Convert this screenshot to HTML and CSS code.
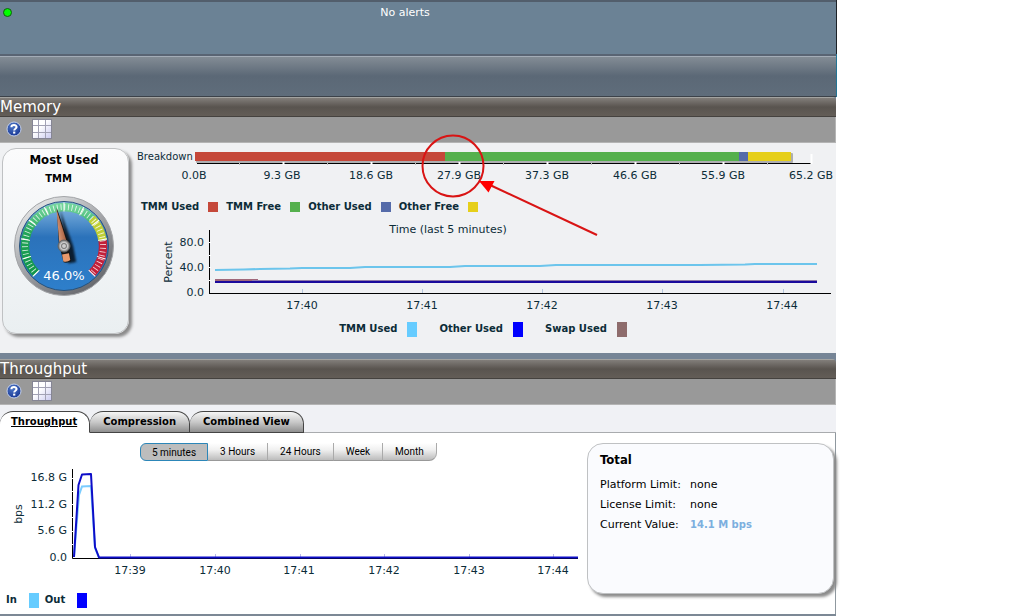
FILE: index.html
```html
<!DOCTYPE html>
<html lang="en">
<head>
<meta charset="utf-8">
<title>Dashboard</title>
<link rel="stylesheet" href="styles.css">
</head>
<body>
<svg width="0" height="0" class="defs" aria-hidden="true">
  <defs>
    <radialGradient id="helpFill" cx="0.4" cy="0.3" r="0.8"><stop offset="0" stop-color="#4e78c8"/><stop offset="1" stop-color="#12308f"/></radialGradient>
    <linearGradient id="cellFill" x1="0" y1="0" x2="1" y2="1"><stop offset="0.4" stop-color="#fff"/><stop offset="1" stop-color="#c9c9ef"/></linearGradient>
    <symbol id="help" viewBox="0 0 16 16">
      <circle cx="8" cy="8" r="7" fill="url(#helpFill)" stroke="#c3cfe8"/>
      <path d="M5.4 6.2C5.4 3.4 10.6 3.4 10.6 6.1C10.6 7.8 8.2 7.7 8.2 9.4" fill="none" stroke="#fff" stroke-width="2"/>
      <rect x="7.1" y="10.6" width="2.2" height="2" fill="#fff"/>
    </symbol>
    <symbol id="grid" viewBox="0 0 20 20">
      <rect x="0.5" y="0.5" width="19" height="19" fill="url(#cellFill)" stroke="#858594"/>
      <path d="M6.5 1V19M13.5 1V19M1 6.5H19M1 13.5H19" stroke="#a2a2b4"/>
    </symbol>
  </defs>
</svg>
<main class="dashboard">
  <header class="status">
    <span class="led"></span>
    <span>No alerts</span>
  </header>
  <div class="strip"></div>

  <section>
    <h2 class="title">Memory</h2>
    <div class="tools">
      <button class="tool" aria-label="Help"><svg width="16" height="16"><use href="#help"/></svg></button>
      <button class="tool" aria-label="Show table"><svg width="20" height="20"><use href="#grid"/></svg></button>
    </div>
    <div class="memory">
      <div class="card gauge-card">
        <h3 class="card-title">Most Used</h3>
        <h4 class="card-sub">TMM</h4>
        <svg class="gauge" viewBox="0 0 104 104" width="104" height="104" role="img" aria-label="TMM 46.0%">
          <defs>
            <linearGradient id="rim" x1="0.1" y1="0" x2="0.8" y2="1"><stop offset="0" stop-color="#f4f4f4"/><stop offset="0.35" stop-color="#b8babd"/><stop offset="0.65" stop-color="#8d8f93"/><stop offset="1" stop-color="#606267"/></linearGradient>
            <linearGradient id="face" x1="0" y1="0" x2="0" y2="1"><stop offset="0" stop-color="#8abbe4"/><stop offset="0.4" stop-color="#2b72ba"/><stop offset="1" stop-color="#2e7fcb"/></linearGradient>
            <linearGradient id="green" x1="0" y1="0" x2="0" y2="1"><stop offset="0" stop-color="#72d49b"/><stop offset="0.4" stop-color="#22a458"/><stop offset="1" stop-color="#11964a"/></linearGradient>
            <linearGradient id="needle" x1="0" y1="0" x2="1" y2="0"><stop offset="0" stop-color="#d99a78"/><stop offset="1" stop-color="#a75f40"/></linearGradient>
            <radialGradient id="hub"><stop offset="0" stop-color="#eee"/><stop offset="0.35" stop-color="#999"/><stop offset="0.6" stop-color="#ccc"/><stop offset="1" stop-color="#666"/></radialGradient>
            <filter id="soft" x="-50%" y="-20%" width="200%" height="140%"><feGaussianBlur stdDeviation="1.2"/></filter>
          </defs>
          <circle cx="52" cy="52" r="49.500" fill="url(#rim)" stroke="#a3a5a8"/>
          <circle cx="52" cy="52" r="44.500" fill="url(#face)" stroke="#27527c"/>
          <path d="M24.4 79.6A39 39 0 1 1 79.6 24.4" fill="none" stroke="url(#green)" stroke-width="8.500"/>
          <path d="M79.6 24.4A39 39 0 0 1 90.6 46.6" fill="none" stroke="#bfcf35" stroke-width="8.500"/>
          <path d="M90.6 46.6A39 39 0 0 1 79.6 79.6" fill="none" stroke="#c2203a" stroke-width="8.500"/>
          <path d="M24.4 79.6A39 39 0 1 1 79.6 79.6" fill="none" stroke="#fff" stroke-opacity="0.8" stroke-width="6" pathLength="269" stroke-dasharray="1.3 4.1"/>
          <path d="M24.4 79.6A39 39 0 1 1 79.6 79.6" fill="none" stroke="#fff" stroke-width="9" pathLength="271.5" stroke-dasharray="1.5 25.5"/>
          <g transform="rotate(-10.8 52 52)">
            <path d="M55 16L61 54V70H53Z" fill="#000" opacity="0.75" filter="url(#soft)"/>
            <path d="M52 13L57 48L56 68Q52 70 48.500 68L47.500 48Z" fill="#161616"/>
            <path d="M51.500 14L55.5 48H48Z" fill="url(#needle)"/>
            <path d="M48.500 60H55.500V67Q52 69 48.500 67Z" fill="#e8996c"/>
          </g>
          <circle cx="52" cy="52" r="6" fill="url(#hub)" stroke="#666"/>
          <circle cx="52" cy="52" r="2.5" fill="#ccc" stroke="#777"/>
          <text x="52" y="86" class="gauge-value">46.0%</text>
        </svg>
      </div>
      <div class="memory-charts">
        <svg class="chart" viewBox="132 143 704 54" role="img" aria-label="Memory breakdown">
          <rect x="196" y="153" width="597" height="10" rx="1" fill="#4a4a4a" opacity="0.4"/>
          <rect x="195" y="152" width="250" height="9" fill="#c5483a"/>
          <rect x="445" y="152" width="295" height="9" fill="#55b04d"/>
          <rect x="739" y="152" width="9" height="9" fill="#556ba9"/>
          <rect x="748" y="152" width="43" height="9" fill="#e6cf1a"/>
          <path d="M197 163.500H811" stroke="#000"/>
          <path d="M283.500 162V165M371.500 162V165M459.500 162V165M547.500 162V165M635.500 162V165M723.500 162V165" stroke="#fff" stroke-width="2"/>
          <path d="M239.500 163V165M327.500 163V165M415.500 163V165M503.500 163V165M591.500 163V165M679.500 163V165M767.500 163V165" stroke="#bbb"/>
          <path d="M811.500 154V164" stroke="#fff" stroke-width="2"/>
          <g class="small"><text x="137" y="160">Breakdown</text></g>
          <g class="mid">
            <text x="194" y="179">0.0B</text><text x="282" y="179">9.3 GB</text><text x="371" y="179">18.6 GB</text><text x="459" y="179">27.9 GB</text><text x="547" y="179">37.3 GB</text><text x="635" y="179">46.6 GB</text><text x="723" y="179">55.9 GB</text><text x="811" y="179">65.2 GB</text>
          </g>
        </svg>
        <ul class="legend breakdown-legend">
          <li>TMM Used<i class="sw red"></i></li>
          <li>TMM Free<i class="sw green"></i></li>
          <li>Other Used<i class="sw slate"></i></li>
          <li>Other Free<i class="sw yellow"></i></li>
        </ul>
        <svg class="chart" viewBox="132 217 704 100" role="img" aria-label="Memory use in percent over time">
          <text x="448" y="233" class="mid">Time (last 5 minutes)</text>
          <text x="172" y="262" class="mid" transform="rotate(-90 172 262)">Percent</text>
          <g class="end"><text x="204" y="246">80.0</text><text x="204" y="271">40.0</text><text x="204" y="296">0.0</text></g>
          <path d="M302.500 289V293M422.500 289V293M542.500 289V293M662.500 289V293M783.500 289V293" stroke="#b5c6dc"/>
          <path d="M209.500 230V293M209 293.500H831" stroke="#000" fill="none"/>
          <path d="M209 242.500H211M209 255.500H211M209 267.500H211M209 280.500H211" stroke="#fff"/>
          <path d="M215 280H258" stroke="#a0687a" stroke-width="2"/>
          <path d="M252 280.500H817" stroke="#8f7aa8"/>
          <path d="M215 282H817" stroke="#1a0a9c" stroke-width="2"/>
          <path d="M215 270L244 269.500L260 269L290 268.500L302 268L350 268L365 267L450 267L465 266L540 266L556 265L700 265L745 264.500L755 264H817" stroke="#6cc5ec" stroke-width="2" fill="none"/>
          <g class="mid"><text x="302" y="309">17:40</text><text x="422" y="309">17:41</text><text x="542" y="309">17:42</text><text x="662" y="309">17:43</text><text x="782" y="309">17:44</text></g>
        </svg>
        <ul class="legend usage-legend">
          <li>TMM Used<i class="sw tall sky"></i></li>
          <li>Other Used<i class="sw tall blue"></i></li>
          <li>Swap Used<i class="sw tall mauve"></i></li>
        </ul>
      </div>
      <svg class="note" width="190" height="110" viewBox="420 130 190 110" aria-hidden="true">
        <circle cx="453" cy="166" r="30.500" fill="none" stroke="#d91414" stroke-width="2"/>
        <path d="M490 185L597 235" stroke="#d91414" stroke-width="2"/>
        <path d="M479 181L494.500 181L488.500 192.500Z" fill="#f00"/>
      </svg>
    </div>
  </section>

  <section class="throughput-section">
    <h2 class="title">Throughput</h2>
    <div class="tools">
      <button class="tool" aria-label="Help"><svg width="16" height="16"><use href="#help"/></svg></button>
      <button class="tool" aria-label="Show table"><svg width="20" height="20"><use href="#grid"/></svg></button>
    </div>
    <div class="tabs" role="tablist">
      <button class="tab active" role="tab" aria-selected="true">Throughput</button>
      <button class="tab" role="tab" aria-selected="false">Compression</button>
      <button class="tab" role="tab" aria-selected="false">Combined View</button>
    </div>
    <div class="throughput">
      <div>
        <div class="ranges">
          <button class="range on">5 minutes</button>
          <button class="range">3 Hours</button>
          <button class="range">24 Hours</button>
          <button class="range">Week</button>
          <button class="range">Month</button>
        </div>
        <svg class="chart" viewBox="0 461 587 125" role="img" aria-label="Throughput over the last 5 minutes">
          <text x="22" y="514" class="mid" transform="rotate(-90 22 514)">bps</text>
          <g class="end"><text x="67" y="481">16.8 G</text><text x="67" y="508">11.2 G</text><text x="67" y="534">5.6 G</text><text x="67" y="561">0.0</text></g>
          <path d="M130.500 554V557M215.500 554V557M300.500 554V557M384.500 554V557M469.500 554V557M553.500 554V557" stroke="#b9b9e8"/>
          <path d="M72.500 469V558.500H578" stroke="#000" fill="none"/>
          <path d="M72 478.500H74M72 491.500H74M72 504.500H74M72 517.500H74M72 531.500H74M72 544.500H74" stroke="#fff"/>
          <path d="M74 557L79 495L82 486.500L91 486L95 548L99 557.500" stroke="#7accff" stroke-width="2" fill="none"/>
          <path d="M74 557L78.500 485L82 474.500L91 474L95 547L99 557.500H578" stroke="#0d0dc8" stroke-width="2" fill="none" stroke-linejoin="round"/>
          <g class="mid"><text x="130" y="574">17:39</text><text x="215" y="574">17:40</text><text x="299" y="574">17:41</text><text x="384" y="574">17:42</text><text x="469" y="574">17:43</text><text x="553" y="574">17:44</text></g>
        </svg>
        <ul class="legend io-legend">
          <li>In<i class="sw tall sky"></i></li>
          <li>Out<i class="sw tall blue"></i></li>
        </ul>
      </div>
      <div class="card total">
        <h3 class="card-title">Total</h3>
        <dl>
          <dt>Platform Limit:</dt><dd>none</dd>
          <dt>License Limit:</dt><dd>none</dd>
          <dt>Current Value:</dt><dd class="value">14.1 M bps</dd>
        </dl>
      </div>
    </div>
  </section>
</main>
</body>
</html>
```
FILE: styles.css
```css
* { box-sizing: border-box; }
body {
  margin: 0;
  padding-right: 187px;
  background: #fff;
  color: #0c2c38;
  font: 11px/14px "DejaVu Sans", Verdana, sans-serif;
}
h2, h3, h4, ul, dl, dd { margin: 0; padding: 0; }
button { font: inherit; color: inherit; margin: 0; padding: 0; border: 0; background: none; }
.defs { position: absolute; }

.dashboard { background: #768596; }
.status {
  position: relative;
  height: 54px;
  padding-top: 4px;
  border-top: 2px solid #525e6c;
  background: #6b8295;
  color: #fff;
  text-align: center;
  box-shadow: 1px 0 #1d2228;
}
.status > span:last-child { display: inline-block; margin-right: 26px; }
.led {
  position: absolute;
  left: 3px;
  top: 6px;
  width: 9px;
  height: 9px;
  border: 1px solid #125a12;
  border-radius: 50%;
  background: #0f0;
}
.strip {
  height: 43px;
  border-top: 2px solid #596473;
  border-bottom: 1px solid #3c4249;
  background: linear-gradient(#a3acb7 0 1px, #838c95 1px, #5b6876 20px, #5f6d7b);
  box-shadow: 1px 0 #237595;
}

.title {
  height: 20px;
  padding-top: 2px;
  border-bottom: 1px solid #45423f;
  border-top-right-radius: 4px;
  background: linear-gradient(#a3a3a0 0 1px, #827e7a 1px, #59544f 10px, #635d57);
  color: #fff;
  font-size: 15px;
  line-height: 16px;
  font-weight: 400;
}
.tools {
  display: flex;
  align-items: center;
  gap: 10px;
  height: 26px;
  padding: 0 0 2px 6px;
  border-right: 1px solid #b5b5b5;
  border-bottom: 1px solid #b4b4b4;
  background: #999;
}
.tool, .tool svg { display: block; }

.memory {
  position: relative;
  display: grid;
  grid-template-columns: 132px minmax(0, 1fr);
  min-height: 210px;
  background: #f0f1f3;
}
.chart { display: block; width: 100%; height: auto; fill: #0c2c38; }
.small { font-size: 10px; }
.mid { text-anchor: middle; }
.end { text-anchor: end; }
.note { position: absolute; left: 420px; top: -13px; }

.card {
  border: 1px solid #bfc1c3;
  border-radius: 14px;
  box-shadow: 3px 3px 3px #8b8b8b;
  color: #000;
}
.card-title { font: bold 13px/16px "DejaVu Sans Condensed", "DejaVu Sans", sans-serif; }
.gauge-card {
  align-self: start;
  width: 127px;
  height: 186px;
  margin: 5px 0 0 2px;
  padding-top: 3px;
  background: linear-gradient(#fbfbfc, #eaeff1);
  text-align: center;
}
.gauge-card .card-title { padding-right: 3px; }
.card-sub { margin-top: 4px; padding-right: 14px; font-size: 10px; line-height: 14px; }
.gauge { display: block; margin: 8px 0 0 9px; }
.gauge-value { fill: #fff; font-size: 13px; text-anchor: middle; }

.legend {
  display: flex;
  list-style: none;
  font-size: 10px;
  font-weight: 700;
  line-height: 16px;
}
.legend li { display: flex; align-items: center; }
.sw { width: 10px; height: 10px; }
.tall { height: 15px; }
.red { background: #c5483a; }
.green { background: #55b04d; }
.slate { background: #556ba9; }
.yellow { background: #e6cf1a; }
.sky { background: #66ccff; }
.blue { background: #0000ff; }
.mauve { background: #8e6c6c; }
.breakdown-legend { gap: 8px; padding: 2px 0 2px 9px; }
.breakdown-legend li { gap: 9px; }
.usage-legend { gap: 22px; justify-content: center; padding: 4px 2px 0 0; }
.usage-legend li { gap: 10px; }

.throughput-section { padding-top: 6px; border-bottom: 2px solid #7c8895; }
.tabs {
  display: flex;
  align-items: flex-end;
  height: 28px;
  background: linear-gradient(#f0f1f5 27px, #a9abae 27px);
}
.tab {
  height: 22px;
  padding: 0 13px;
  border: 1px solid #444;
  border-left-width: 0;
  border-radius: 13px 13px 0 0;
  background: linear-gradient(#f6f6f6, #c9c9c9 50%, #8f8f8f);
  color: #000;
  font-size: 10px;
  font-weight: 700;
}
.tab.active { padding: 0 12px 0 11px; border-bottom-color: #fff; background: #fff; text-decoration: underline; }
.throughput {
  display: grid;
  grid-template-columns: minmax(0, 1fr) 249px;
  min-height: 181px;
  background: #fff;
  box-shadow: inset -1px 0 #8f989f;
}
.ranges { display: flex; padding: 10px 0 0 140px; }
.range {
  height: 18px;
  padding: 0 12px;
  border-right: 1px solid #aaa;
  border-bottom: 1px solid #999;
  background: linear-gradient(#fff, #f0f0f0 40%, #bcbcbc);
  color: #000;
  font: 10px/15px Roboto, sans-serif;
}
.range:last-child { border-radius: 0 0 8px 0; }
.range.on { padding: 0 11px; border: 1px solid #2c86b8; border-radius: 6px 0 0 6px; background: #bdbdbd; line-height: 13px; }
.io-legend { padding: 6px 0 0 6px; gap: 6px; }
.io-legend li { gap: 12px; }

.total {
  align-self: start;
  height: 151px;
  margin: 10px 2px 0 0;
  padding: 8px 12px;
  border-radius: 16px;
  background: #fafbfe;
}
.total dl {
  display: grid;
  grid-template-columns: 84px 1fr;
  gap: 6px;
  margin-top: 10px;
}
.value { color: #7cafdf; font-size: 10px; font-weight: 700; }
```
